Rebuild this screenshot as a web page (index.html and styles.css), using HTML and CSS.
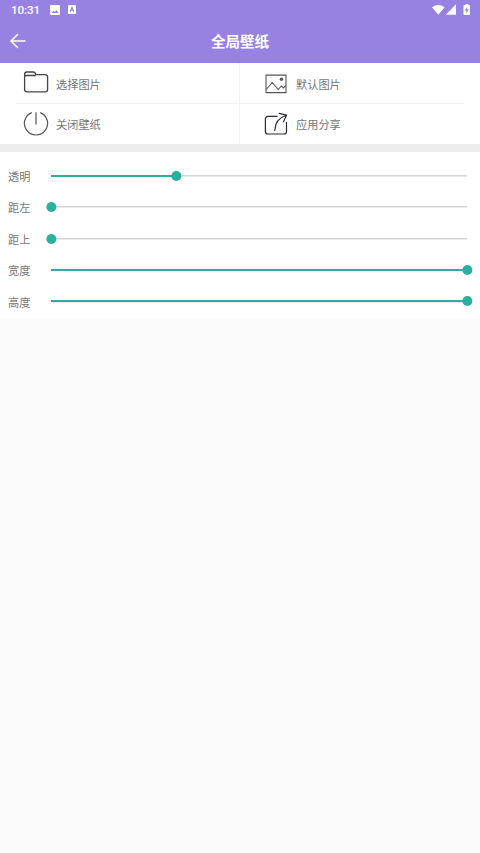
FILE: index.html
```html
<!DOCTYPE html>
<html lang="zh-CN">
<head>
<meta charset="utf-8">
<title>全局壁纸</title>
<link rel="stylesheet" href="styles.css">
</head>
<body>
<header class="top">
  <div class="status">
    <span class="clock">10:31</span>
    <svg class="s-image" width="10" height="10" viewBox="0 0 10 10"><path fill="#fff" fill-rule="evenodd" d="M1 0h8q1 0 1 1v8q0 1-1 1H1q-1 0-1-1V1q0-1 1-1zM1.500 8h7L6.500 5 5 7 3.500 5.800z"/></svg>
    <svg class="s-app" width="8" height="9" viewBox="0 0 8 9"><rect width="8" height="9" rx="1" fill="#fff"/><path d="M2.200 6.700L4 2.300l1.800 4.400M2.800 5.300h2.400" fill="none" stroke="#9782e2" stroke-width="1.100"/></svg>
    <svg class="s-right" width="38" height="12" viewBox="0 0 38 12"><path fill="#fff" d="M0 3.200Q6.300-1.800 12.600 3.200L6.300 10.700zM24 .3v10.400H13.800zM32.200 1h1.400V0h2.600v1h1.300q.7 0 .7.700v8.600q0 .7-.7.700h-5.300q-.7 0-.7-.7V1.700q0-.7.7-.7z"/><path fill="#9782e2" d="M35.300 2.800l-2.400 3.700h1.500v2.900l2.400-3.800h-1.500z"/></svg>
  </div>
  <div class="bar">
    <svg class="back" width="16" height="16" viewBox="0 0 16 16"><path d="M15 8H1.200M7.500 1.500L1 8l6.500 6.500" fill="none" stroke="#fff" stroke-width="1.600" stroke-linecap="round" stroke-linejoin="round"/></svg>
    <h1>全局壁纸</h1>
  </div>
</header>
<nav class="actions">
  <div class="row">
    <div class="cell"><svg width="26" height="26" viewBox="0 0 26 26"><path d="M1.600 6.500V4.200Q1.600 2 3.800 2h6.400q2 0 2.600 2.600h9.400q2.400 0 2.400 2.400v12.500q0 2.400-2.400 2.400H4q-2.400 0-2.400-2.400V7q0-1.500 1.500-1.500h9.500" fill="none" stroke="#444" stroke-width="1.300" stroke-linejoin="round"/></svg><span>选择图片</span></div>
    <div class="cell"><svg width="26" height="26" viewBox="0 0 26 26"><g fill="none" stroke="#555" stroke-width="1.100"><path d="M3 5.100h20v17.500H3z"/><path d="M3.200 19.500l6-7 6 7 3.200-3.500 2 2 2.400-2.700"/></g><circle cx="18.500" cy="9.300" r="1.700" fill="#555"/></svg><span>默认图片</span></div>
  </div>
  <div class="row">
    <div class="cell"><svg width="26" height="26" viewBox="0 0 26 26"><path d="M8.800 1.600a11.600 11.600 0 1 0 8.400 0M13 1.200v12.300" fill="none" stroke="#555" stroke-width="1.200"/></svg><span>关闭壁纸</span></div>
    <div class="cell"><svg width="26" height="26" viewBox="0 0 26 26"><path d="M14 5.400H5Q2.400 5.400 2.400 8v12.500Q2.400 23 5 23h16q2.500 0 2.500-2.500v-9.200M11.800 19.500Q12 8 23.300 4.300M16.200 2.300l7.400 1.900-3.100 6.500" fill="none" stroke="#29293a" stroke-width="1.200" stroke-linecap="round" stroke-linejoin="round"/></svg><span>应用分享</span></div>
  </div>
</nav>
<main class="sliders">
  <div class="setting"><label>透明</label><div class="track"><div class="fill" style="width:30.1%"></div><i class="thumb"></i></div></div>
  <div class="setting"><label>距左</label><div class="track"><div class="fill" style="width:0%"></div><i class="thumb"></i></div></div>
  <div class="setting"><label>距上</label><div class="track"><div class="fill" style="width:0%"></div><i class="thumb"></i></div></div>
  <div class="setting"><label>宽度</label><div class="track"><div class="fill" style="width:100%"></div><i class="thumb"></i></div></div>
  <div class="setting"><label>高度</label><div class="track"><div class="fill" style="width:100%"></div><i class="thumb"></i></div></div>
</main>
</body>
</html>
```
FILE: styles.css
```css
* { box-sizing: border-box; }
body {
  margin: 0;
  min-height: 853px;
  background: #fafafa;
  color: #767676;
  font-family: Roboto, "Noto Sans CJK SC", sans-serif;
  font-size: 11.2px;
}
svg { display: block; flex: none; }
.top { height: 63px; background: #9782e2; color: #fff; }
.status { height: 19px; display: flex; align-items: center; padding: 0 10px 0 11px; }
.clock { font-size: 11.7px; font-weight: 500; width: 38.5px; line-height: 19px; padding-top: 1px; letter-spacing: -.1px; }
.s-app { margin-left: 8px; }
.s-right { margin-left: auto; }
.bar {
  height: 44px;
  display: grid;
  grid-template-columns: 32px 1fr 32px;
  align-items: center;
}
.back { margin-left: 10px; }
.bar h1 { margin: 0; padding-top: 3px; text-align: center; font-size: 14.5px; font-weight: 700; line-height: 22px; }
.actions { height: 81px; background: #fff; display: grid; grid-template-rows: 41px 40px; }
.row { display: grid; grid-template-columns: 1fr 1fr; background: #fff; }
.row:first-child {
  background: linear-gradient(#f2f2f2, #f2f2f2) 16px 100% / 448px 1px no-repeat;
}
.cell { display: flex; align-items: center; gap: 7px; padding-left: 23px; }
.cell:first-child { border-right: 1px solid #f2f2f2; }
.row:first-child svg { margin-top: -1px; }
.sliders { border-top: 8px solid #ededed; background: #fff; padding-top: 8px; height: 173.5px; }
.setting { height: 31.45px; display: flex; align-items: center; padding: 0 13px 0 8px; }
.setting label { width: 43px; flex: none; padding-top: .5px; }
.track { flex: 1; height: 10px; display: flex; align-items: center; background: linear-gradient(#d4d4d4, #d4d4d4) 0 50% / 100% 1.5px no-repeat; }
.fill { height: 2px; flex: none; background: #2bb0a0; }
.thumb { flex: none; width: 10px; height: 10px; margin: 0 -5px; border-radius: 50%; background: #2bb0a0; transform: translateX(.4px); }
```
